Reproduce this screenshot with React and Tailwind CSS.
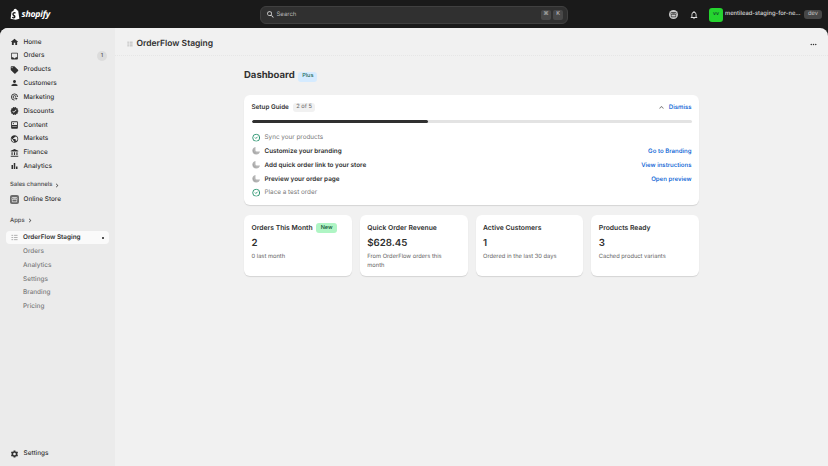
import React from "react";
import { MdHome, MdInbox, MdLocalOffer, MdPerson, MdVerified, MdPublic, MdAccountBalance, MdBarChart, MdSettings, MdStorefront, MdSearch, MdNotificationsNone, MdMoreHoriz, MdExpandLess, MdChevronRight } from "react-icons/md";
import { CircleCheck } from "lucide-react";

const Target = (p) => (
  <svg viewBox="0 0 16 16" fill="none" stroke="currentColor" strokeWidth="1.6" {...p}>
    <path d="M13.5 8A5.5 5.5 0 1 0 8 13.5" />
    <path d="M10.5 8A2.5 2.5 0 1 0 8 10.5" />
    <path d="M8.5 8.5l5.5 2-2.2 1-1 2.2z" fill="currentColor" stroke="none" />
  </svg>
);
const ContentIcon = (p) => (
  <svg viewBox="0 0 16 16" fill="currentColor" {...p}>
    <path d="M3.5 1.5h9A1.5 1.5 0 0 1 14 3v10a1.5 1.5 0 0 1-1.5 1.5h-9A1.5 1.5 0 0 1 2 13V3a1.5 1.5 0 0 1 1.5-1.5zm0 1.8V8h9V3.3z M4 10v1.2h8V10z" fillRule="evenodd" />
    <circle cx="6" cy="5.5" r="1" />
  </svg>
);
const Pending = (p) => (
  <svg viewBox="0 0 16 16" {...p}>
    <path d="M6.5 1A7.200 7.200 0 1 0 15 9.500 H9 A2.500 2.500 0 0 1 6.500 7z" fill="#b5b5b5" />
    <path d="M2.500 6A5 5 0 0 0 8 12.500" stroke="#9a9a9a" strokeWidth="1" fill="none" />
  </svg>
);
const AppGlyph = ({ className }) => (
  <svg viewBox="0 0 8 8" className={className} fill="#a8a8a8">
    <rect x="0.5" y="1" width="2" height="1" /><rect x="0.5" y="3.5" width="2" height="1" /><rect x="0.5" y="6" width="2" height="1" />
    <rect x="3.5" y="1" width="4" height="1" /><rect x="3.5" y="3.5" width="4" height="1" /><rect x="3.5" y="6" width="4" height="1" />
  </svg>
);
const Logo = () => (
  <svg viewBox="0 0 16 18" className="w-[10px] h-[12px]">
    <path d="M11.5 3.2 13 3.4l2 13.2-6 1.4-8-1.4L2.4 5.2l3-1C6 2 7.2.5 8.7.7c.5 0 .9.4 1.1.8.8 0 1.3.8 1.7 1.7z" fill="#fff" />
    <path d="M9 6.8l-.5 1.7s-.7-.3-1.4-.2c-1.200.1-1.200.8-1.200 1 .1 1 2.800 1.200 2.900 3.600.1 1.900-1.200 3.100-2.800 3.200-2 .1-3-1-3-1l.4-1.800s1.100.8 1.900.8c.6 0 .8-.5.8-.8-.1-1.300-2.300-1.300-2.400-3.500-.1-1.800 1.100-3.700 3.800-3.900.9-.1 1.500.9 1.500.9z" fill="#1a1a1a" />
  </svg>
);

const nav = [
  ["Home", MdHome], ["Orders", MdInbox, "1"], ["Products", MdLocalOffer], ["Customers", MdPerson], ["Marketing", Target],
  ["Discounts", MdVerified], ["Content", ContentIcon], ["Markets", MdPublic], ["Finance", MdAccountBalance], ["Analytics", MdBarChart],
];
const steps = [
  ["Sync your products", true],
  ["Customize your branding", false, "Go to Branding"],
  ["Add quick order link to your store", false, "View instructions"],
  ["Preview your order page", false, "Open preview"],
  ["Place a test order", true],
];
const stats = [
  ["Orders This Month", "2", "0 last month", true],
  ["Quick Order Revenue", "$628.45", "From OrderFlow orders this month"],
  ["Active Customers", "1", "Ordered in the last 30 days"],
  ["Products Ready", "3", "Cached product variants"],
];

const Row = ({ label, Icon, badge }) => (
  <div className="h-[13.84px] flex items-center pl-[10px] pr-[8px] text-[6.4px] font-medium text-[#303030]">
    <Icon className="w-[9px] h-[9px] text-[#303030] mr-[4.500px] -translate-y-[0.5px]" />
    <span>{label}</span>
    {badge && <span className="ml-auto w-[10px] h-[10px] rounded-full bg-[#dcdcdc] flex items-center justify-center text-[5.500px] text-[#555]">{badge}</span>}
  </div>
);

export default function App() {
  return (
    <div className="w-[828px] h-[466px] overflow-hidden bg-[#1a1a1a] flex flex-col font-['Inter',sans-serif] [text-rendering:geometricPrecision] antialiased">
      <header className="h-[28px] shrink-0 flex items-center text-white pt-[1px]">
        <div className="flex items-center gap-[1.500px] pl-[10px] w-[260px]">
          <Logo />
          <span className="text-[8.700px] font-bold italic tracking-[-0.2px] font-['Open_Sans',sans-serif]">shopify</span>
        </div>
        <div className="w-[308px] h-[18px] rounded-[6px] bg-[#303030] border border-[#404040] flex items-center pl-[5px] pr-[4px] text-[6px] text-[#b5b5b5]">
          <MdSearch className="w-[9px] h-[9px] text-[#e3e3e3] mr-[1.500px]" />
          <span>Search</span>
          <span className="ml-auto w-[10px] h-[10px] rounded-[2px] bg-[#484848] flex items-center justify-center text-[5.500px] text-[#ccc]">⌘</span>
          <span className="ml-[2px] w-[10px] h-[10px] rounded-[2px] bg-[#484848] flex items-center justify-center text-[5.500px] text-[#ccc]">K</span>
        </div>
        <div className="ml-[101px] flex items-center">
          <span className="w-[9px] h-[9px] rounded-full bg-[#c9c9c9] flex items-center justify-center">
            <MdStorefront className="w-[7px] h-[7px] text-[#333]" />
          </span>
          <MdNotificationsNone className="ml-[11px] w-[10px] h-[10px] text-[#e3e3e3]" />
          <div className="ml-[10px] w-[14px] h-[14px] rounded-[3px] bg-[#25d42f] flex items-center justify-center text-[5px] text-[#14532d] font-bold">vv</div>
          <span className="ml-[2px] w-[77px] text-[5.800px] font-medium text-[#d9d9d9] whitespace-nowrap">mentilead-staging-for-ne...</span>
          <span className="ml-[2px] w-[18px] h-[9px] rounded-[3px] bg-[#474747] flex items-center justify-center text-[5.800px] text-[#c4c4c4]">dev</span>
        </div>
      </header>

      <div className="flex-1 min-h-0 flex rounded-t-[8px] overflow-hidden bg-[#f1f1f1]">
        <aside className="w-[115px] shrink-0 bg-[#ebebeb] flex flex-col pt-[7.500px] pb-[5px]">
          {nav.map(([l, I, b]) => <Row key={l} label={l} Icon={I} badge={b} />)}
          <div className="mt-[5px] h-[14px] pl-[10px] flex items-center text-[5.900px] font-medium text-[#4a4a4a]">
            Sales channels<MdChevronRight className="w-[8px] h-[8px] ml-[1px] -translate-y-[0.5px]" />
          </div>
          <div className="h-[14px] flex items-center pl-[10px] text-[6.400px] font-medium text-[#303030]">
            <span className="w-[9px] h-[9px] rounded-[2px] bg-[#6b6b6b] flex items-center justify-center mr-[4.500px]">
              <MdStorefront className="w-[7px] h-[7px] text-[#e8e8e8]" />
            </span>
            Online Store
          </div>
          <div className="mt-[7.500px] h-[14px] pl-[10px] flex items-center text-[5.900px] font-medium text-[#4a4a4a]">
            Apps<MdChevronRight className="w-[8px] h-[8px] ml-[1px] -translate-y-[0.5px]" />
          </div>
          <div className="mt-[2.500px] ml-[6px] w-[103px] h-[13.500px] rounded-[4px] bg-[#fafafa] flex items-center pl-[4.500px] pr-[5px] text-[6.400px] font-semibold text-[#303030]">
            <AppGlyph className="w-[7px] h-[7px] mr-[5.500px]" />
            OrderFlow Staging
            <span className="ml-auto w-[2px] h-[2px] rounded-full bg-[#1a1a1a]" />
          </div>
          <div className="pt-[0.500px]">
            {["Orders", "Analytics", "Settings", "Branding", "Pricing"].map((s) => (
              <div key={s} className="h-[13.84px] flex items-center pl-[23px] text-[6.400px] font-medium text-[#7a7a7a]">{s}</div>
            ))}
          </div>
          <div className="mt-auto">
            <Row label="Settings" Icon={MdSettings} />
          </div>
        </aside>

        <main className="flex-1 min-w-0 flex flex-col">
          <div className="h-[28px] shrink-0 flex items-center pl-[12px] pr-[10px] pt-[5px] border-b border-dotted border-[#e6e6e6]">
            <AppGlyph className="w-[6px] h-[6px] mr-[3.500px]" />
            <span className="text-[8.500px] font-semibold text-[#303030]">OrderFlow Staging</span>
            <MdMoreHoriz className="ml-auto w-[9px] h-[9px] text-[#303030]" />
          </div>
          <div className="w-[455px] mx-auto">
            <div className="mt-[12.500px] h-[16px] flex items-center">
              <h1 className="text-[9.500px] font-bold text-[#303030]">Dashboard</h1>
              <span className="ml-[3.500px] h-[10px] px-[4px] rounded-[3px] bg-[#d5ebff] flex items-center text-[5.500px] font-medium text-[#1f6b5c]">Plus</span>
            </div>
            <section className="mt-[10.500px] h-[110px] bg-white rounded-[6px] shadow-[0_1px_1px_rgba(0,0,0,0.12)] px-[7.500px] pt-[6px]">
              <div className="h-[13px] flex items-center">
                <span className="text-[6.300px] font-semibold text-[#303030]">Setup Guide</span>
                <span className="ml-[4px] h-[9.500px] px-[3.500px] rounded-[3px] bg-[#f1f1f1] flex items-center text-[5.700px] text-[#616161]">2 of 5</span>
                <MdExpandLess className="ml-auto w-[9px] h-[9px] text-[#707070]" />
                <span className="ml-[2.500px] text-[6.100px] font-medium text-[#005bd3]">Dismiss</span>
              </div>
              <div className="mt-[6px] h-[3px] rounded-full bg-[#e3e3e3] overflow-hidden">
                <div className="h-full w-[40%] rounded-full bg-[#303030]" />
              </div>
              <div className="mt-[8px]">
                {steps.map(([t, done, link]) => (
                  <div key={t} className="h-[13.84px] flex items-center text-[6.350px]">
                    {done ? <CircleCheck className="w-[8.500px] h-[8.500px] text-[#178a62] mr-[4.500px] -translate-y-[0.5px]" strokeWidth={2.4} /> : <Pending className="w-[8.500px] h-[8.500px] mr-[4.500px] -translate-y-[0.5px]" />}
                    <span className={done ? "text-[#7a7a7a]" : "font-semibold text-[#303030]"}>{t}</span>
                    {link && <span className="ml-auto text-[6.100px] font-medium text-[#005bd3]">{link}</span>}
                  </div>
                ))}
              </div>
            </section>
            <section className="mt-[10px] grid grid-cols-4 gap-[8px]">
              {stats.map(([t, v, d, isNew]) => (
                <div key={t} className="h-[61px] bg-white rounded-[6px] shadow-[0_1px_1px_rgba(0,0,0,0.12)] px-[7.500px] pt-[7.500px]">
                  <div className="h-[11px] flex items-center">
                    <span className="text-[6.800px] font-semibold text-[#303030]">{t}</span>
                    {isNew && <span className="ml-[3.500px] h-[10.500px] px-[4.500px] rounded-[3px] bg-[#aff5c4] flex items-center text-[5.500px] font-medium text-[#0c5132]">New</span>}
                  </div>
                  <div className="mt-[3.500px] h-[14px] flex items-center text-[9.700px] font-semibold text-[#303030]">{v}</div>
                  <div className="mt-[2px] text-[5.750px] leading-[8.500px] text-[#616161]">{d}</div>
                </div>
              ))}
            </section>
          </div>
        </main>
      </div>
    </div>
  );
}
